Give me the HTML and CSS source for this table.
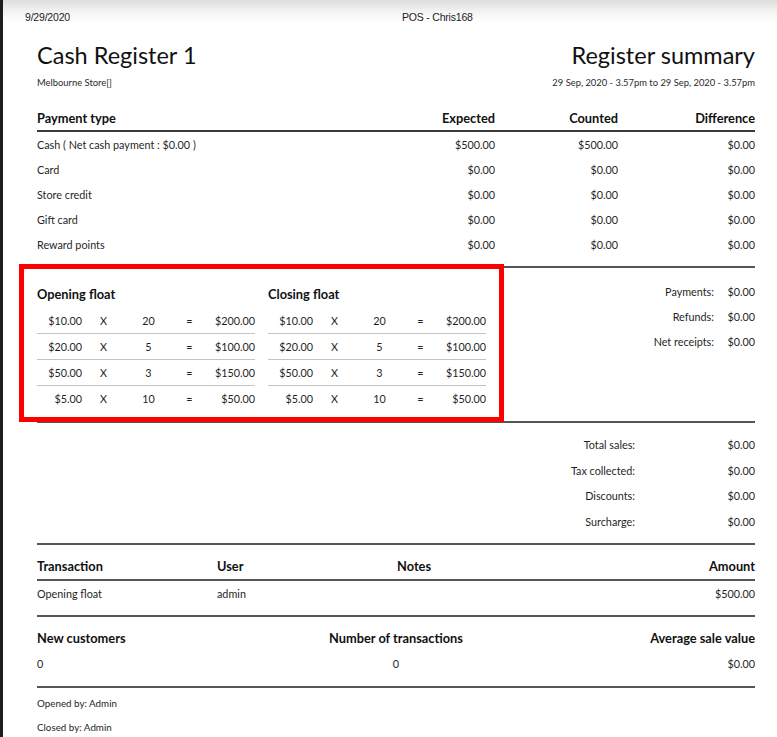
FILE: index.html
```html
<!DOCTYPE html>
<html>
<head>
<meta charset="utf-8">
<link rel="stylesheet" href="styles.css">
</head>
<body>
<div class="page">
  <div class="topbar">
    <span class="date">9/29/2020</span>
    <span class="doc-title">POS - Chris168</span>
  </div>
  <div class="sheet">
    <div class="head">
      <div class="head-left">
        <h1 class="title">Cash Register 1</h1>
        <div class="sub">Melbourne Store[]</div>
      </div>
      <div class="head-right">
        <h1 class="title">Register summary</h1>
        <div class="sub">29 Sep, 2020 - 3.57pm to 29 Sep, 2020 - 3.57pm</div>
      </div>
    </div>

    <div class="pay">
      <div class="pay-row pay-head">
        <span>Payment type</span><span class="r">Expected</span><span class="r">Counted</span><span class="r">Difference</span>
      </div>
      <div class="pay-body">
        <div class="pay-row"><span>Cash ( Net cash payment : $0.00 )</span><span class="r">$500.00</span><span class="r">$500.00</span><span class="r">$0.00</span></div>
        <div class="pay-row"><span>Card</span><span class="r">$0.00</span><span class="r">$0.00</span><span class="r">$0.00</span></div>
        <div class="pay-row"><span>Store credit</span><span class="r">$0.00</span><span class="r">$0.00</span><span class="r">$0.00</span></div>
        <div class="pay-row"><span>Gift card</span><span class="r">$0.00</span><span class="r">$0.00</span><span class="r">$0.00</span></div>
        <div class="pay-row"><span>Reward points</span><span class="r">$0.00</span><span class="r">$0.00</span><span class="r">$0.00</span></div>
      </div>
    </div>

    <div class="floats-section">
      <div class="floats">
        <div class="float">
          <div class="float-title">Opening float</div>
          <div class="float-row"><span class="r">$10.00</span><span class="x">X</span><span class="c">20</span><span class="c">=</span><span class="r">$200.00</span></div>
          <div class="float-row"><span class="r">$20.00</span><span class="x">X</span><span class="c">5</span><span class="c">=</span><span class="r">$100.00</span></div>
          <div class="float-row"><span class="r">$50.00</span><span class="x">X</span><span class="c">3</span><span class="c">=</span><span class="r">$150.00</span></div>
          <div class="float-row"><span class="r">$5.00</span><span class="x">X</span><span class="c">10</span><span class="c">=</span><span class="r">$50.00</span></div>
        </div>
        <div class="float">
          <div class="float-title">Closing float</div>
          <div class="float-row"><span class="r">$10.00</span><span class="x">X</span><span class="c">20</span><span class="c">=</span><span class="r">$200.00</span></div>
          <div class="float-row"><span class="r">$20.00</span><span class="x">X</span><span class="c">5</span><span class="c">=</span><span class="r">$100.00</span></div>
          <div class="float-row"><span class="r">$50.00</span><span class="x">X</span><span class="c">3</span><span class="c">=</span><span class="r">$150.00</span></div>
          <div class="float-row"><span class="r">$5.00</span><span class="x">X</span><span class="c">10</span><span class="c">=</span><span class="r">$50.00</span></div>
        </div>
      </div>
      <div class="receipts">
        <span class="lbl">Payments:</span><span class="val">$0.00</span>
        <span class="lbl">Refunds:</span><span class="val">$0.00</span>
        <span class="lbl">Net receipts:</span><span class="val">$0.00</span>
      </div>
      <div class="highlight"></div>
    </div>

    <div class="totals-section">
      <div class="totals">
        <span class="lbl">Total sales:</span><span class="val">$0.00</span>
        <span class="lbl">Tax collected:</span><span class="val">$0.00</span>
        <span class="lbl">Discounts:</span><span class="val">$0.00</span>
        <span class="lbl">Surcharge:</span><span class="val">$0.00</span>
      </div>
    </div>

    <div class="tx">
      <div class="tx-row tx-head"><span>Transaction</span><span>User</span><span>Notes</span><span class="r">Amount</span></div>
      <div class="tx-row tx-body"><span>Opening float</span><span>admin</span><span></span><span class="r">$500.00</span></div>
    </div>

    <div class="stats">
      <div class="stats-row stats-head"><span>New customers</span><span class="c">Number of transactions</span><span class="r">Average sale value</span></div>
      <div class="stats-row"><span>0</span><span class="c">0</span><span class="r">$0.00</span></div>
    </div>

    <div class="footer">
      <div class="foot-line">Opened by: Admin</div>
      <div class="foot-line">Closed by: Admin</div>
    </div>
  </div>
</div>
</body>
</html>
```

FILE: styles.css
```css
* { box-sizing: border-box; }
html, body { margin: 0; padding: 0; background: #fff; }
body {
  font-family: Lato, "Open Sans", sans-serif;
  color: #1f1f1f;
  font-size: 10.8px;
}
.page {
  border-left: 3px solid #1d1d1d;
  min-height: 737px;
  overflow: hidden;
}
.topbar {
  height: 34px;
  display: grid;
  grid-template-columns: 377px auto;
  align-items: center;
  padding-left: 22px;
  background: linear-gradient(#dddddd 0px, #f4f4f4 12px, #ffffff 22px);
  font-family: "Liberation Sans", Arial, sans-serif;
  font-size: 10.5px;
  color: #222;
  letter-spacing: -0.2px;
}
.sheet {
  padding: 0 22px 0 34px;
}
.head {
  display: flex;
  justify-content: space-between;
  align-items: flex-start;
  padding-top: 6px;
}
.head-right { text-align: right; }
.title {
  margin: 0;
  font-weight: 400;
  font-size: 23.5px;
  line-height: 30px;
  color: #111;
}
.sub {
  margin-top: 7px;
  font-size: 9.4px;
  line-height: 12px;
  color: #2a2a2a;
}
.r { text-align: right; }
.c { text-align: center; }

.pay { margin-top: 17px; }
.pay-row {
  display: grid;
  grid-template-columns: 1fr 100px 123px 137px;
  line-height: 25px;
}
.pay-head {
  font-weight: 700;
  font-size: 12.8px;
  color: #111;
  line-height: 24px;
  border-bottom: 2px solid #3a3a3a;
}
.pay-body {
  padding-bottom: 9px;
  border-bottom: 2px solid #555;
}

.floats-section {
  position: relative;
  display: flex;
  justify-content: space-between;
  border-bottom: 2px solid #555;
}
.floats {
  display: flex;
  gap: 13px;
  padding: 12px 0 9px;
}
.float { width: 218px; }
.float-title {
  font-weight: 700;
  font-size: 12.8px;
  color: #111;
  line-height: 28px;
}
.float-row {
  display: grid;
  grid-template-columns: 45px 43px 47px 35px 48px;
  height: 26px;
  line-height: 26px;
  border-bottom: 1px solid #c4c4c4;
}
.float-row:last-child { border-bottom: none; }
.float-row .x { padding-left: 18px; }
.receipts {
  display: grid;
  grid-template-columns: auto 32px;
  column-gap: 9px;
  align-content: start;
  padding-top: 11px;
  line-height: 25px;
}
.receipts .lbl, .totals .lbl { text-align: right; }
.receipts .val, .totals .val { text-align: right; }
.highlight {
  position: absolute;
  left: -18px;
  top: -4px;
  width: 485px;
  height: 158px;
  border: 5px solid #ff0000;
  pointer-events: none;
}

.totals-section {
  display: flex;
  justify-content: flex-end;
  padding: 9px 0 9px;
  border-bottom: 2px solid #555;
}
.totals {
  display: grid;
  grid-template-columns: auto 120px;
  line-height: 25.5px;
}

.tx {
  padding-top: 9px;
  border-bottom: 2px solid #555;
}
.tx-row {
  display: grid;
  grid-template-columns: 180px 180px 1fr 120px;
  line-height: 25px;
}
.tx-head {
  font-weight: 700;
  font-size: 12.8px;
  color: #111;
  border-bottom: 2px solid #555;
}
.tx-body { padding-bottom: 9px; line-height: 25px; }

.stats {
  padding-top: 9px;
  padding-bottom: 10px;
  border-bottom: 2px solid #555;
}
.stats-row {
  display: grid;
  grid-template-columns: 1fr 1fr 1fr;
  line-height: 25px;
}
.stats-head {
  font-weight: 700;
  font-size: 12.8px;
  color: #111;
}

.footer { padding-top: 3px; }
.foot-line {
  font-size: 9.8px;
  line-height: 24px;
}
```
